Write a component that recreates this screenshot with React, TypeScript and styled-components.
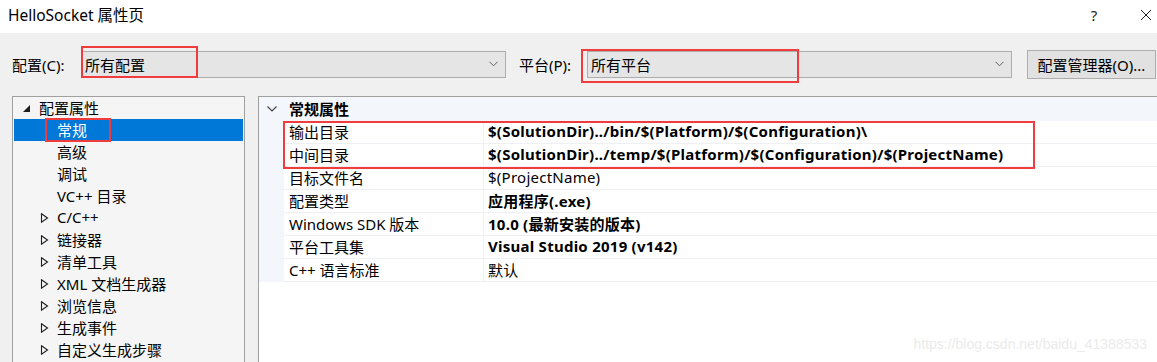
import React from "react";
import styled, { createGlobalStyle } from "styled-components";

const Global = createGlobalStyle`
  html, body { margin: 0; padding: 0; background: #ffffff; }
  body { font-family: "Noto Sans", "Noto Sans CJK SC", sans-serif; }
  * { box-sizing: border-box; }
`;

const FONT = `"Noto Sans", "Noto Sans CJK SC", sans-serif`;

const Window = styled.div`
  width: 1157px;
  height: 362px;
  overflow: hidden;
  position: relative;
  display: flex;
  flex-direction: column;
  font-family: ${FONT};
  font-size: 15px;
  color: #000;
`;

const TitleBar = styled.div`
  height: 33px;
  flex: none;
  background: #fff;
  display: flex;
  align-items: center;
  padding: 0 0 4px 8px;
`;

const Title = styled.div`
  flex: 1;
  font-size: 15.5px;
  color: #000;
`;

const TitleButton = styled.div<{ $w: number }>`
  width: ${(p) => p.$w}px;
  display: flex;
  justify-content: center;
  align-items: center;
  font-size: 15px;
  color: #222;
`;

const Body = styled.div`
  flex: 1;
  background: #f0f0f0;
  padding: 17px 0 0 12px;
  display: flex;
  flex-direction: column;
  gap: 17px;
  min-height: 0;
`;

const ConfigRow = styled.div`
  height: 29px;
  display: flex;
  align-items: center;
`;

const Label = styled.div<{ $w: number; $pl?: number }>`
  width: ${(p) => p.$w}px;
  padding-left: ${(p) => p.$pl ?? 0}px;
  padding-bottom: 1px;
  font-size: 15px;
  white-space: nowrap;
`;

const Combo = styled.div<{ $w: number }>`
  position: relative;
  width: ${(p) => p.$w}px;
  height: 27px;
  background: #e5e5e5;
  border: 1px solid #adadad;
  display: flex;
  align-items: center;
  padding: 0 0 1px 3px;
  font-size: 15px;
`;

const ComboText = styled.span`
  flex: 1;
`;

const Chevron = styled.svg`
  width: 9px;
  height: 6px;
  margin-right: 7px;
`;

const Button = styled.div`
  width: 129px;
  height: 29px;
  margin-left: 15px;
  background: #e1e1e1;
  border: 1px solid #adadad;
  display: flex;
  align-items: center;
  justify-content: center;
  padding-bottom: 1px;
  font-size: 15px;
  white-space: nowrap;
`;

const RedBox = styled.div<{ $l: number; $t: number; $w: number; $h: number }>`
  position: absolute;
  left: ${(p) => p.$l}px;
  top: ${(p) => p.$t}px;
  width: ${(p) => p.$w}px;
  height: ${(p) => p.$h}px;
  border: 2px solid #f03c3c;
  pointer-events: none;
`;

const Panels = styled.div`
  flex: 1;
  display: flex;
  gap: 13px;
  min-height: 0;
`;

const Tree = styled.div`
  width: 233px;
  flex: none;
  background: #f5f5f5;
  border: 1px solid #a0a0a0;
  border-bottom: none;
  padding: 0 1px;
`;

const TreeItem = styled.div<{ $indent: number; $selected?: boolean }>`
  position: relative;
  height: 22px;
  display: flex;
  align-items: center;
  padding-left: ${(p) => p.$indent}px;
  padding-bottom: 2px;
  background: ${(p) => (p.$selected ? "#0078d7" : "transparent")};
  color: ${(p) => (p.$selected ? "#fff" : "#000")};
  font-size: 15px;
  white-space: nowrap;
`;

const Arrow = styled.svg`
  width: 9px;
  height: 10px;
  margin-right: 8px;
  margin-top: 2px;
  flex: none;
`;

const Grid = styled.div`
  flex: 1;
  background: #fff;
  border: 1px solid #a0a0a0;
  border-right: none;
  border-bottom: none;
  position: relative;
`;

const GroupHeader = styled.div`
  height: 24px;
  background: #f3f6fb;
  display: flex;
  align-items: center;
  padding-bottom: 2px;
  font-weight: 700;
  font-size: 15px;
`;

const GroupChevron = styled.svg`
  width: 10px;
  height: 6px;
  margin: 2px 12px 0 8px;
`;

const Rows = styled.div`
  position: relative;
`;

const Row = styled.div`
  height: 23px;
  display: flex;
  align-items: stretch;
`;

const Gutter = styled.div`
  width: 25px;
  flex: none;
  background: #f3f6fb;
`;

const NameCell = styled.div`
  width: 200px;
  flex: none;
  display: flex;
  align-items: center;
  padding: 0 0 2px 5px;
  border-bottom: 1px solid #eef0f3;
  border-right: 1px solid #eef0f3;
  white-space: nowrap;
`;

const ValueCell = styled.div<{ $bold?: boolean }>`
  flex: 1;
  display: flex;
  align-items: center;
  padding: 0 0 2px 4px;
  border-bottom: 1px solid #eef0f3;
  font-weight: ${(p) => (p.$bold ? 700 : 400)};
  letter-spacing: 0.25px;
  white-space: nowrap;
`;

const Watermark = styled.div`
  position: absolute;
  right: 10px;
  bottom: 10px;
  font-family: "Liberation Sans", Arial, sans-serif;
  font-size: 14px;
  color: #ebebeb;
  pointer-events: none;
`;

const ChevronIcon = () => (
  <Chevron viewBox="0 0 9 6">
    <path d="M0.5 0.8 L4.5 4.8 L8.5 0.8" fill="none" stroke="#606060" strokeWidth="1" />
  </Chevron>
);

const Expander = ({ open }: { open?: boolean }) =>
  open ? (
    <Arrow viewBox="0 0 9 10">
      <path d="M8 2 L8 9 L1 9 Z" fill="#1e1e1e" />
    </Arrow>
  ) : (
    <Arrow viewBox="0 0 9 10">
      <path d="M1.5 0.8 L7.5 5 L1.5 9.2 Z" fill="none" stroke="#1e1e1e" strokeWidth="1.1" />
    </Arrow>
  );

const treeChildren = ["高级", "调试", "VC++ 目录"];
const treeGroups = ["C/C++", "链接器", "清单工具", "XML 文档生成器", "浏览信息", "生成事件", "自定义生成步骤"];

const rows: { name: string; value: string; bold?: boolean }[] = [
  { name: "输出目录", value: "$(SolutionDir)../bin/$(Platform)/$(Configuration)\\", bold: true },
  { name: "中间目录", value: "$(SolutionDir)../temp/$(Platform)/$(Configuration)/$(ProjectName)", bold: true },
  { name: "目标文件名", value: "$(ProjectName)" },
  { name: "配置类型", value: "应用程序(.exe)", bold: true },
  { name: "Windows SDK 版本", value: "10.0 (最新安装的版本)", bold: true },
  { name: "平台工具集", value: "Visual Studio 2019 (v142)", bold: true },
  { name: "C++ 语言标准", value: "默认" },
];

export default function App() {
  return (
    <Window>
      <Global />
      <TitleBar>
        <Title>HelloSocket 属性页</Title>
        <TitleButton $w={20}>?</TitleButton>
        <TitleButton $w={31} />
        <TitleButton $w={22}>
          <svg width="12" height="12" viewBox="0 0 12 12">
            <path d="M1 1 L11 11 M11 1 L1 11" stroke="#222" strokeWidth="1" />
          </svg>
        </TitleButton>
      </TitleBar>
      <Body>
        <ConfigRow>
          <Label $w={69}>配置(C):</Label>
          <Combo $w={425}>
            <ComboText>所有配置</ComboText>
            <ChevronIcon />
            <RedBox $l={-1} $t={-6} $w={117} $h={32} />
          </Combo>
          <Label $w={81} $pl={13}>平台(P):</Label>
          <Combo $w={425}>
            <ComboText>所有平台</ComboText>
            <ChevronIcon />
            <RedBox $l={-7} $t={-3} $w={218} $h={34} />
          </Combo>
          <Button>配置管理器(O)...</Button>
        </ConfigRow>
        <Panels>
          <Tree>
            <TreeItem $indent={8}>
              <Expander open />
              配置属性
            </TreeItem>
            <TreeItem $indent={43} $selected>
              常规
              <RedBox $l={31} $t={-1} $w={66} $h={24} />
            </TreeItem>
            {treeChildren.map((t) => (
              <TreeItem key={t} $indent={43}>
                {t}
              </TreeItem>
            ))}
            {treeGroups.map((t) => (
              <TreeItem key={t} $indent={26}>
                <Expander />
                {t}
              </TreeItem>
            ))}
          </Tree>
          <Grid>
            <GroupHeader>
              <GroupChevron viewBox="0 0 10 6">
                <path d="M0.5 0.5 L5 5 L9.5 0.5" fill="none" stroke="#444" strokeWidth="1.2" />
              </GroupChevron>
              常规属性
            </GroupHeader>
            <Rows>
              {rows.map((r) => (
                <Row key={r.name}>
                  <Gutter />
                  <NameCell>{r.name}</NameCell>
                  <ValueCell $bold={r.bold}>{r.value}</ValueCell>
                </Row>
              ))}
              <RedBox $l={24} $t={0} $w={752} $h={48} />
            </Rows>
            <Watermark>https://blog.csdn.net/baidu_41388533</Watermark>
          </Grid>
        </Panels>
      </Body>
    </Window>
  );
}
